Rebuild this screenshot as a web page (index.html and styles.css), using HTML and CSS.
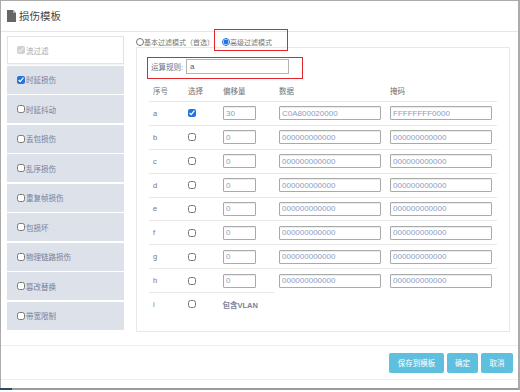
FILE: index.html
```html
<html>
<head>
    <meta charset="utf-8">
    <link rel="stylesheet" href="styles.css">
</head>
<body>
<div class="dialog">
    <div class="dialog-header">
        <svg class="title-icon" width="9" height="12" viewBox="0 0 9 12"><path d="M0 0h6l3 3v9H0z" fill="#666"/><path d="M6 0v3h3z" fill="#aaa"/></svg>
        <span class="title">损伤模板</span>
    </div>

    <div class="dialog-body">
        <div class="sidebar">
            <label class="item first"><input type="checkbox" checked disabled>流过滤</label>
            <label class="item"><input type="checkbox" checked>时延损伤</label>
            <label class="item"><input type="checkbox">时延抖动</label>
            <label class="item"><input type="checkbox">丢包损伤</label>
            <label class="item"><input type="checkbox">乱序损伤</label>
            <label class="item"><input type="checkbox">重复帧损伤</label>
            <label class="item"><input type="checkbox">包损坏</label>
            <label class="item"><input type="checkbox">物理链路损伤</label>
            <label class="item"><input type="checkbox">篡改替换</label>
            <label class="item"><input type="checkbox">带宽限制</label>
        </div>

        <div class="main">
            <div class="modes">
                <label class="mode"><input type="radio" name="mode">基本过滤模式（首选）</label>
                <label class="mode"><input type="radio" name="mode" checked>高级过滤模式</label>
            </div>
            <div class="panel">
                <div class="rule">
                    <span class="rule-label">运算规则:</span>
                    <input class="rule-input" type="text" value="a">
                </div>
                <div class="filters">
                    <div class="row head">
                        <div class="c1">序号</div>
                        <div class="c2">选择</div>
                        <div class="c3">偏移量</div>
                        <div class="c4">数据</div>
                        <div class="c5">掩码</div>
                    </div>
                    <div class="row">
                        <div class="c1">a</div>
                        <div class="c2"><input type="checkbox" checked></div>
                        <div class="c3"><input class="offset set" type="text" value="30"></div>
                        <div class="c4"><input class="hex" type="text" value="C0A800020000"></div>
                        <div class="c5"><input class="hex mask" type="text" value="FFFFFFFF0000"></div>
                    </div>
                    <div class="row">
                        <div class="c1">b</div>
                        <div class="c2"><input type="checkbox"></div>
                        <div class="c3"><input class="offset" type="text" value="0"></div>
                        <div class="c4"><input class="hex" type="text" value="000000000000"></div>
                        <div class="c5"><input class="hex" type="text" value="000000000000"></div>
                    </div>
                    <div class="row">
                        <div class="c1">c</div>
                        <div class="c2"><input type="checkbox"></div>
                        <div class="c3"><input class="offset" type="text" value="0"></div>
                        <div class="c4"><input class="hex" type="text" value="000000000000"></div>
                        <div class="c5"><input class="hex" type="text" value="000000000000"></div>
                    </div>
                    <div class="row">
                        <div class="c1">d</div>
                        <div class="c2"><input type="checkbox"></div>
                        <div class="c3"><input class="offset" type="text" value="0"></div>
                        <div class="c4"><input class="hex" type="text" value="000000000000"></div>
                        <div class="c5"><input class="hex" type="text" value="000000000000"></div>
                    </div>
                    <div class="row">
                        <div class="c1">e</div>
                        <div class="c2"><input type="checkbox"></div>
                        <div class="c3"><input class="offset" type="text" value="0"></div>
                        <div class="c4"><input class="hex" type="text" value="000000000000"></div>
                        <div class="c5"><input class="hex" type="text" value="000000000000"></div>
                    </div>
                    <div class="row">
                        <div class="c1">f</div>
                        <div class="c2"><input type="checkbox"></div>
                        <div class="c3"><input class="offset" type="text" value="0"></div>
                        <div class="c4"><input class="hex" type="text" value="000000000000"></div>
                        <div class="c5"><input class="hex" type="text" value="000000000000"></div>
                    </div>
                    <div class="row">
                        <div class="c1">g</div>
                        <div class="c2"><input type="checkbox"></div>
                        <div class="c3"><input class="offset" type="text" value="0"></div>
                        <div class="c4"><input class="hex" type="text" value="000000000000"></div>
                        <div class="c5"><input class="hex" type="text" value="000000000000"></div>
                    </div>
                    <div class="row">
                        <div class="c1 warn">h</div>
                        <div class="c2"><input type="checkbox"></div>
                        <div class="c3"><input class="offset" type="text" value="0"></div>
                        <div class="c4"><input class="hex" type="text" value="000000000000"></div>
                        <div class="c5"><input class="hex" type="text" value="000000000000"></div>
                    </div>
                    <div class="row short">
                        <div class="c1">i</div>
                        <div class="c2"><input type="checkbox"></div>
                        <div class="c3 vlan">包含VLAN</div>
                    </div>
                </div>
            </div>
        </div>
    </div>

    <div class="dialog-footer">
        <button class="btn save">保存到模板</button>
        <button class="btn ok">确定</button>
        <button class="btn cancel">取消</button>
    </div>

    <div class="mark mark-mode"></div>
    <div class="mark mark-rule"></div>
</div>
</body>
</html>
```

FILE: styles.css
```css
body {
    margin: 0;
    font-family: "Liberation Sans", "Noto Sans CJK SC", sans-serif;
    font-size: 7.5px;
    color: #666;
    background: #fff;
}

.dialog {
    position: relative;
    width: 520px;
    height: 390px;
    box-sizing: border-box;
    border: 1px solid #ababab;
    border-right-width: 2px;
    border-bottom: 2px solid #9c9c9c;
    display: flex;
    flex-direction: column;
}

.dialog::after {
    content: "";
    position: absolute;
    left: -1px;
    bottom: -2px;
    width: 12px;
    height: 2px;
    background: #2d4a68;
}

.dialog-header {
    height: 31px;
    box-sizing: border-box;
    border-bottom: 1px solid #e6e6e6;
    display: flex;
    align-items: center;
    padding-left: 6px;
    padding-bottom: 1px;
}

.title-icon {
    margin-right: 3px;
}

.title {
    font-size: 10.5px;
    color: #444;
}

.dialog-body {
    height: 313px;
    display: flex;
    padding: 4px 0 0 6px;
    box-sizing: border-box;
}

.sidebar {
    width: 117px;
    display: flex;
    flex-direction: column;
    gap: 1.55px;
}

.item {
    height: 28px;
    box-sizing: border-box;
    background: #dde1ea;
    display: flex;
    align-items: center;
    padding-left: 10px;
    color: #75809a;
}

.item.first {
    background: #fff;
    border: 1px solid #e3e3e3;
    box-shadow: 0 1px 1px rgba(0, 0, 0, 0.04);
    padding-left: 9px;
    color: #aaa;
}

input[type=checkbox] {
    width: 8px;
    height: 8px;
    margin: 0 1px 0 0;
    accent-color: #1f74e0;
}

input[type=radio] {
    width: 8px;
    height: 8px;
    margin: 0;
    accent-color: #1f74e0;
}

.main {
    margin-left: 12px;
    width: 374px;
}

.modes {
    height: 11px;
    display: flex;
    align-items: center;
    gap: 8px;
    font-size: 7px;
    color: #777;
}

.mode {
    display: flex;
    align-items: center;
    white-space: nowrap;
}

.panel {
    height: 285px;
    box-sizing: border-box;
    border: 1px solid #e8e8e8;
    padding: 11px 12px 0 12px;
}

.rule {
    height: 15px;
    display: flex;
    align-items: center;
    padding-left: 2px;
    color: #6b7488;
}

.rule-label {
    white-space: nowrap;
    margin-right: 3px;
}

.rule-input {
    width: 103px;
    height: 15px;
    box-sizing: border-box;
    border: 1px solid #b4b4b4;
    font-family: inherit;
    font-size: 8px;
    color: #555;
    padding: 0 3px;
}

.filters {
    width: 348px;
    margin-top: 6px;
}

.row {
    display: flex;
    align-items: center;
    height: 23.875px;
    box-sizing: border-box;
    border-top: 1px solid #e8e8e8;
}

.row.head {
    height: 21px;
    border-top: none;
    color: #707070;
}

.row.short {
    width: 125px;
}

.row > div {
    padding-left: 4px;
    box-sizing: border-box;
}

.c1 { width: 35px; }
.c2 { width: 35px; }
.c3 { width: 56px; }
.c4 { width: 111px; }
.c5 { width: 111px; }

.c1 {
    color: #777;
}

.c1.warn {
    color: #a0605a;
}

.vlan {
    font-weight: bold;
    color: #7a8294;
    white-space: nowrap;
}

.row input[type=text] {
    height: 14px;
    box-sizing: border-box;
    border: 1px solid #aaa;
    border-radius: 1px;
    box-shadow: inset 0 1px 1px rgba(0, 0, 0, 0.08);
    font-family: "Liberation Sans", sans-serif;
    font-size: 8px;
    padding: 0 2px;
    color: #8a9cc4;
}

.offset {
    width: 33px;
}

.offset.set {
    color: #a3655a;
}

.hex {
    width: 102px;
}

.hex.mask {
    color: #7687b0;
}

.dialog-footer {
    height: 35px;
    box-sizing: border-box;
    border-top: 1px solid #eeeeee;
    border-bottom: 1px solid #eeeeee;
    display: flex;
    justify-content: flex-end;
    align-items: center;
    gap: 3px;
    padding-right: 5px;
}

.btn {
    height: 20px;
    border: none;
    border-radius: 2px;
    background: #5ec0de;
    color: #fff;
    font-family: inherit;
    font-size: 7.5px;
    padding: 0;
}

.btn.save {
    width: 55px;
}

.btn.ok {
    width: 31px;
}

.btn.cancel {
    width: 32px;
}

.mark {
    position: absolute;
    border: 1.5px solid #e3262b;
    box-sizing: border-box;
}

.mark-mode {
    left: 213px;
    top: 28px;
    width: 74px;
    height: 22px;
}

.mark-rule {
    left: 146px;
    top: 56px;
    width: 156px;
    height: 22px;
}
```
